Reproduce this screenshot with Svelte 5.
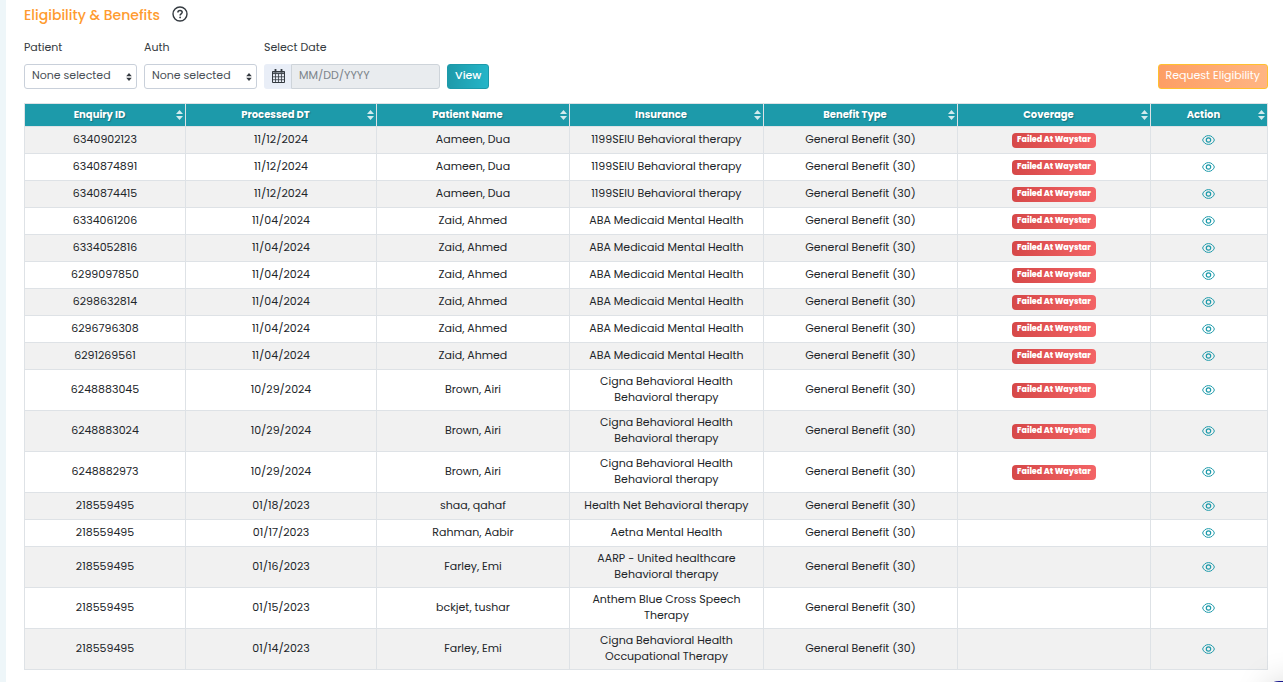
<script>
  // Column headings and their share of the table width
  const columns = [
    { label: 'Enquiry ID', width: 161 },
    { label: 'Processed DT', width: 191 },
    { label: 'Patient Name', width: 193 },
    { label: 'Insurance', width: 194 },
    { label: 'Benefit Type', width: 194 },
    { label: 'Coverage', width: 193 },
    { label: 'Action', width: 117 }
  ];
  const totalWidth = columns.reduce((sum, c) => sum + c.width, 0);

  const benefit = 'General Benefit (30)';
  const failed = 'Failed At Waystar';

  // Eligibility enquiries, newest first
  const rows = [
    ['6340902123', '11/12/2024', 'Aameen, Dua', ['1199SEIU Behavioral therapy'], failed],
    ['6340874891', '11/12/2024', 'Aameen, Dua', ['1199SEIU Behavioral therapy'], failed],
    ['6340874415', '11/12/2024', 'Aameen, Dua', ['1199SEIU Behavioral therapy'], failed],
    ['6334061206', '11/04/2024', 'Zaid, Ahmed', ['ABA Medicaid Mental Health'], failed],
    ['6334052816', '11/04/2024', 'Zaid, Ahmed', ['ABA Medicaid Mental Health'], failed],
    ['6299097850', '11/04/2024', 'Zaid, Ahmed', ['ABA Medicaid Mental Health'], failed],
    ['6298632814', '11/04/2024', 'Zaid, Ahmed', ['ABA Medicaid Mental Health'], failed],
    ['6296796308', '11/04/2024', 'Zaid, Ahmed', ['ABA Medicaid Mental Health'], failed],
    ['6291269561', '11/04/2024', 'Zaid, Ahmed', ['ABA Medicaid Mental Health'], failed],
    ['6248883045', '10/29/2024', 'Brown, Airi', ['Cigna Behavioral Health', 'Behavioral therapy'], failed],
    ['6248883024', '10/29/2024', 'Brown, Airi', ['Cigna Behavioral Health', 'Behavioral therapy'], failed],
    ['6248882973', '10/29/2024', 'Brown, Airi', ['Cigna Behavioral Health', 'Behavioral therapy'], failed],
    ['218559495', '01/18/2023', 'shaa, qahaf', ['Health Net Behavioral therapy'], ''],
    ['218559495', '01/17/2023', 'Rahman, Aabir', ['Aetna Mental Health'], ''],
    ['218559495', '01/16/2023', 'Farley, Emi', ['AARP - United healthcare', 'Behavioral therapy'], ''],
    ['218559495', '01/15/2023', 'bckjet, tushar', ['Anthem Blue Cross Speech', 'Therapy'], ''],
    ['218559495', '01/14/2023', 'Farley, Emi', ['Cigna Behavioral Health', 'Occupational Therapy'], '']
  ];
</script>

{#snippet caret()}
  <svg class="caret" viewBox="0 0 6 8" width="6" height="8" aria-hidden="true">
    <path d="M3 0 5.8 3.2H.2zM3 8 .2 4.8h5.6z" fill="#343a40" />
  </svg>
{/snippet}

<main class="page">
  <header class="title">
    <h2>Eligibility &amp; Benefits</h2>
    <button class="help" aria-label="Help">
      <svg viewBox="0 0 16 16" width="16" height="16" fill="none" stroke="#343a40">
        <circle cx="8" cy="8" r="7" stroke-width="1.4" />
        <path d="M5.9 6.5C5.9 5.2 6.8 4.4 8 4.4s2.2.8 2.2 1.9c0 1.5-2.1 1.6-2.1 3.1" stroke-width="1.5" />
        <circle cx="8.1" cy="11.4" r=".9" fill="#343a40" stroke="none" />
      </svg>
    </button>
  </header>

  <!-- Filters -->
  <form class="filters" onsubmit={(e) => e.preventDefault()}>
    <div class="field">
      <label for="patient">Patient</label>
      <div class="select">
        <select id="patient"><option>None selected</option></select>
        {@render caret()}
      </div>
    </div>
    <div class="field">
      <label for="auth">Auth</label>
      <div class="select">
        <select id="auth"><option>None selected</option></select>
        {@render caret()}
      </div>
    </div>
    <div class="field">
      <label for="date">Select Date</label>
      <div class="date">
        <span class="addon">
          <svg viewBox="0 0 13 14" width="13" height="14" fill="none" stroke="#343a40" aria-hidden="true">
            <path d="M.5 2.500h12v11H.5z" />
            <path d="M.5 3h12v1.600H.5z" />
            <path d="M3.500 5v8.500M6.500 5v8.500M9.500 5v8.500M.5 7.800h12M.5 10.700h12" stroke-width=".8" />
            <path d="M3.500 0v3.500M9.500 0v3.500" stroke-width="1.800" />
          </svg>
        </span>
        <input id="date" type="text" placeholder="MM/DD/YYYY" readonly />
      </div>
    </div>
    <button class="btn view" type="submit">View</button>
    <button class="btn request" type="button">Request Eligibility</button>
  </form>

  <table>
    <colgroup>
      {#each columns as col}
        <col style="width: {(col.width / totalWidth) * 100}%" />
      {/each}
    </colgroup>
    <thead>
      <tr>
        {#each columns as col}
          <th scope="col">
            <div class="head">
              <span>{col.label}</span>
              <svg viewBox="0 0 7 10" width="7" height="10" aria-hidden="true">
                <path d="M3.500 0 7 4H0zM3.500 10 0 6h7z" fill="#d2ebee" />
              </svg>
            </div>
          </th>
        {/each}
      </tr>
    </thead>
    <tbody>
      {#each rows as [id, date, patient, insurance, coverage]}
        <tr>
          <td>{id}</td>
          <td>{date}</td>
          <td>{patient}</td>
          <td>
            {#each insurance as line}
              <div>{line}</div>
            {/each}
          </td>
          <td>{benefit}</td>
          <td class="coverage">
            {#if coverage}
              <span class="badge">{coverage}</span>
            {/if}
          </td>
          <td class="action">
            <button class="eye" aria-label="View {id}">
              <svg viewBox="0 0 13 10" width="13" height="10" fill="none" stroke="#1d9aaa">
                <path d="M.6 5C1.600 2.200 3.800.6 6.500.6S11.400 2.200 12.400 5C11.400 7.800 9.200 9.400 6.500 9.400S1.600 7.800.6 5z" />
                <circle cx="6.500" cy="5" r="2.200" stroke-width="1.200" />
              </svg>
            </button>
          </td>
        </tr>
      {/each}
    </tbody>
  </table>
</main>

<!-- Floating chat launcher, mostly below the fold -->
<div class="chat"></div>

<style>
  :global(body) {
    background: #fff;
    font-family: Poppins, Inter, sans-serif;
    font-size: 11px;
    color: #343a40;
  }
  :global(*) {
    box-sizing: border-box;
  }
  .page {
    border-left: 6px solid #eef6f9;
    padding: 5px 15px 13px 18px;
  }
  button,
  input,
  select {
    font: inherit;
    color: inherit;
  }
  .title {
    display: flex;
    align-items: center;
    gap: 12px;
    height: 20px;
  }
  h2 {
    margin: 0;
    font-size: 14px;
    font-weight: 500;
    line-height: 20px;
    color: #ff9b2f;
  }
  .help,
  .eye {
    display: inline-flex;
    padding: 0;
    border: 0;
    background: none;
    cursor: pointer;
  }
  .help {
    margin-bottom: 2px;
  }
  /* Filter bar */
  .filters {
    display: flex;
    align-items: flex-end;
    gap: 7px;
    margin: 14px 0;
  }
  .field label {
    display: block;
    line-height: 16px;
    margin-bottom: 9px;
  }
  .select {
    position: relative;
    width: 113px;
  }
  select {
    width: 100%;
    height: 25px;
    padding: 0 7px 3px;
    border: 1px solid #c9d0da;
    border-radius: 3px;
    background: #fff;
    color: #495057;
    appearance: none;
  }
  .caret {
    position: absolute;
    right: 5px;
    top: 9px;
  }
  .date {
    display: flex;
    width: 176px;
    height: 25px;
  }
  .addon {
    display: flex;
    align-items: center;
    padding: 0 6px 2px 8px;
    border-radius: 3px 0 0 3px;
    background: #e9eef7;
  }
  input {
    flex: 1;
    min-width: 0;
    padding: 0 7px 2px;
    border: 1px solid #ced4da;
    border-radius: 0 3px 3px 0;
    background: #e9ecef;
  }
  input::placeholder {
    color: #7b838a;
  }
  .btn {
    height: 25px;
    padding: 0 7px 2px;
    border: 1px solid #1d9aaa;
    border-radius: 3px;
    color: #fff;
    cursor: pointer;
  }
  .view {
    background: linear-gradient(90deg, #1d9aaa, #25b5c8);
    font-weight: 500;
  }
  .request {
    margin-left: auto;
    border-color: #ffc02e;
    background: linear-gradient(90deg, #fd9e64, #ffb583);
  }
  /* Enquiries table */
  table {
    width: 100%;
    table-layout: fixed;
    border-collapse: collapse;
    text-align: center;
  }
  th,
  td {
    border: 1px solid #dee2e6;
  }
  th {
    padding: 3px 2px 3px 4px;
    background: #1d9aaa;
    color: #fff;
    font-size: 10px;
    font-weight: 700;
    line-height: 16px;
    text-shadow: 1px 1px 1px rgba(0, 0, 0, 0.25);
  }
  .head {
    display: flex;
    align-items: center;
  }
  .head span {
    flex: 1;
    padding-right: 6px;
  }
  td {
    height: 27px;
    padding: 3px 4px 5px;
    color: #212529;
    line-height: 16px;
    vertical-align: middle;
  }
  tbody tr:nth-child(odd) {
    background: #f1f1f1;
  }
  .coverage {
    padding: 5px 4px 4px;
  }
  .badge {
    display: block;
    width: fit-content;
    margin: 0 auto;
    padding: 0 5px 1px;
    border-radius: 4px;
    background: linear-gradient(90deg, #d64848, #f36466);
    color: #fff;
    font-size: 8px;
    font-weight: 800;
    line-height: 14px;
  }
  .action {
    line-height: 14px;
  }
  .eye {
    vertical-align: middle;
  }
  .chat {
    position: fixed;
    right: -42px;
    bottom: -59px;
    width: 60px;
    height: 60px;
    border-radius: 14px;
    background: #1b1b8f;
    box-shadow: 0 0 32px rgba(0, 0, 0, 0.15);
  }
</style>
